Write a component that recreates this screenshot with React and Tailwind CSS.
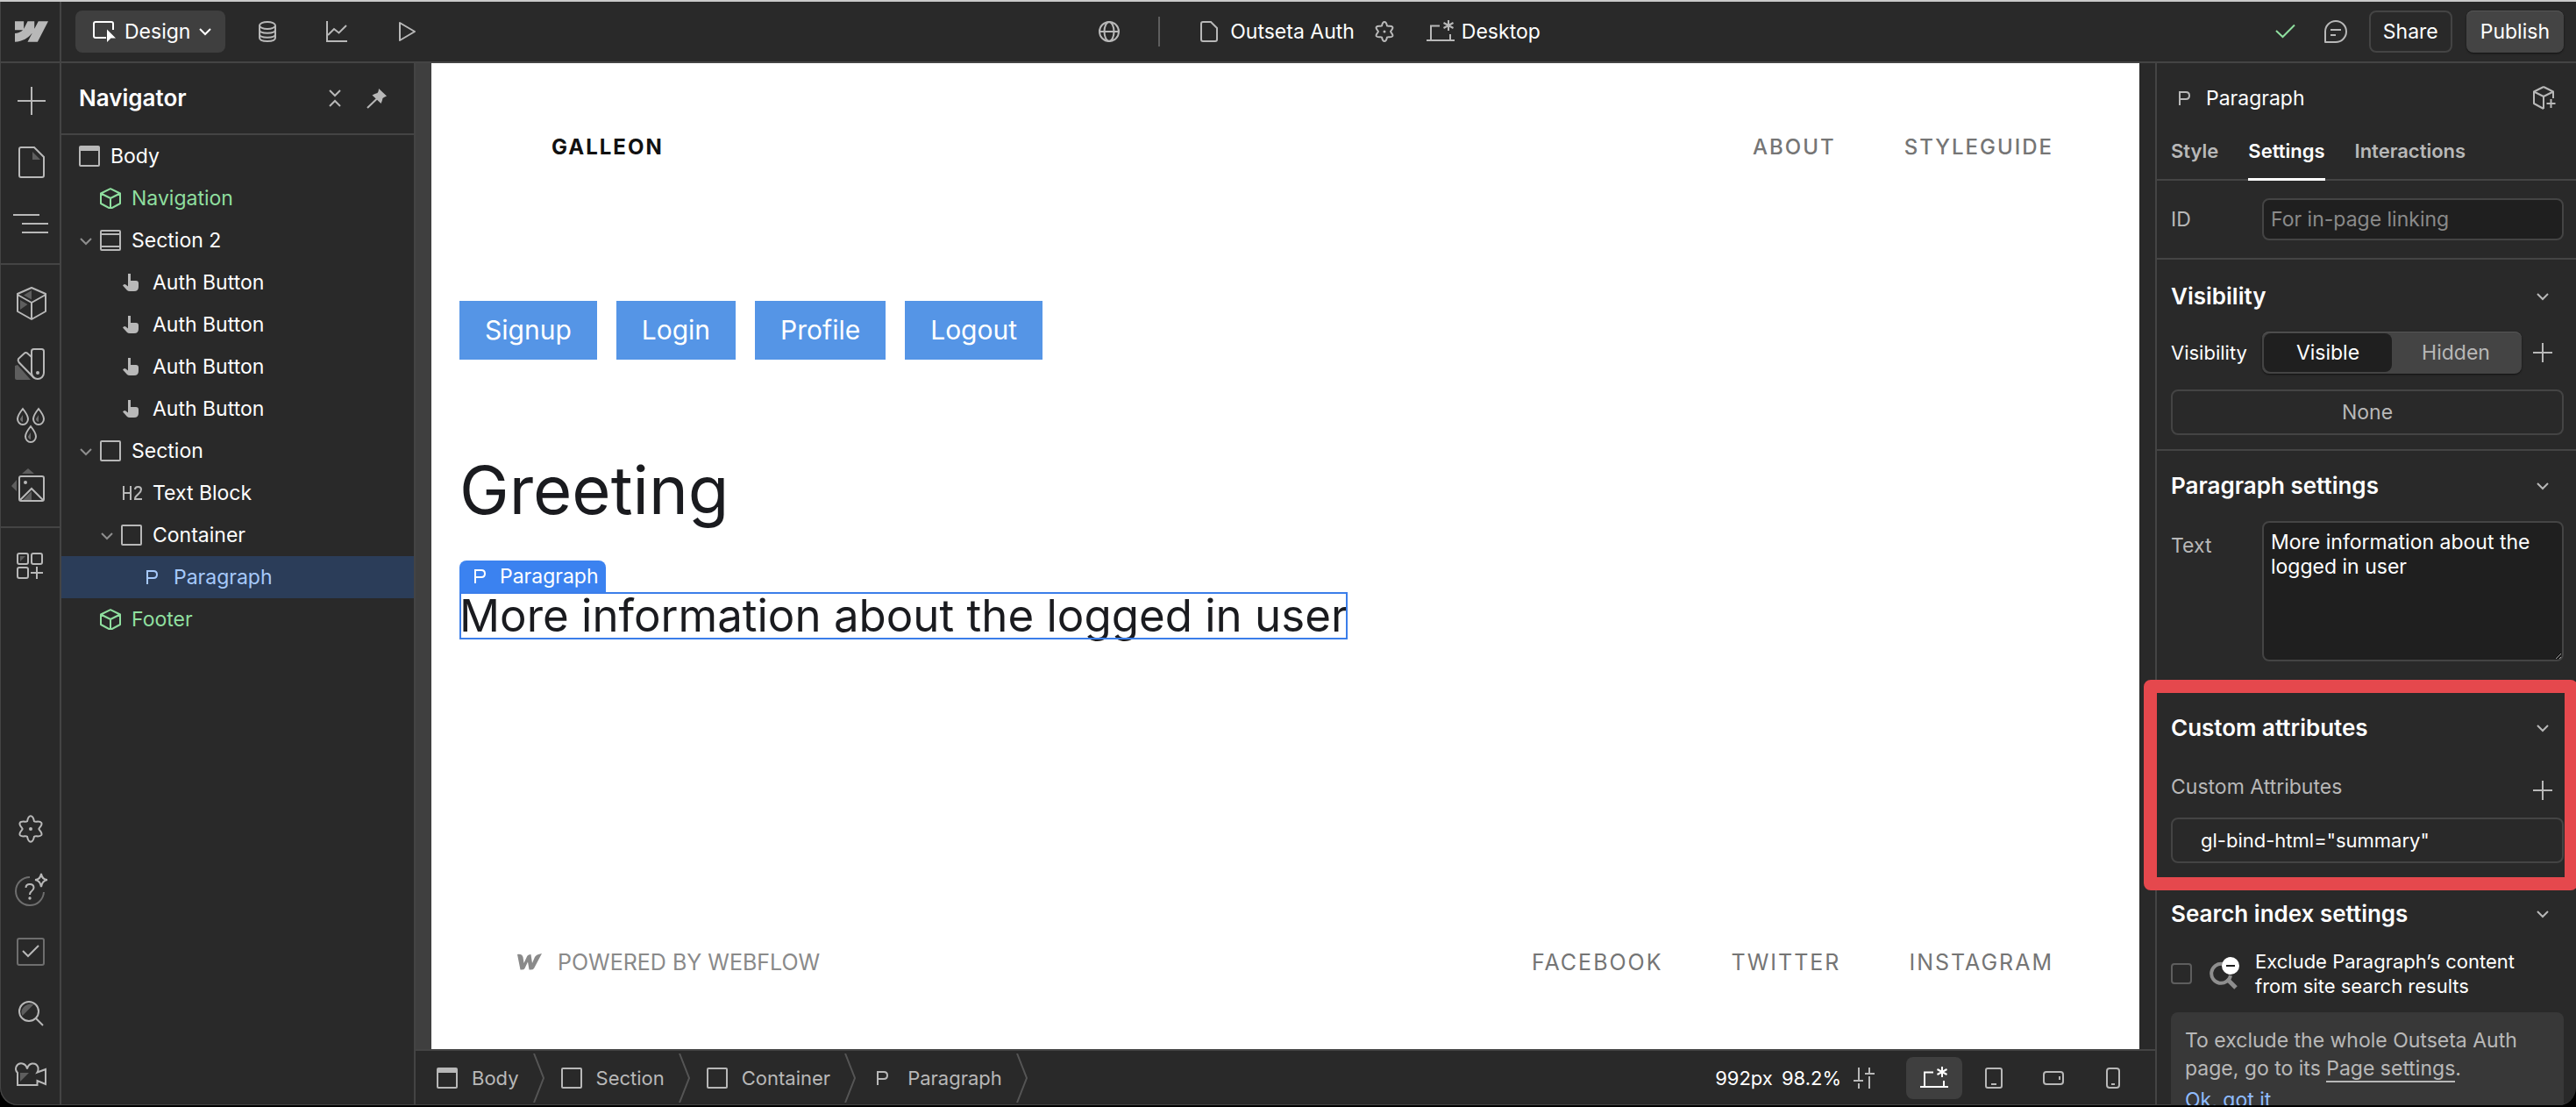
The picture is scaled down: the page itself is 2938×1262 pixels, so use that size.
import React from 'react';

function Icon({ w = 24, h = 24, sw = 2, className = '', children }) {
  return (
    <svg width={w} height={h} viewBox={`0 0 ${w} ${h}`} fill="none" stroke="currentColor" strokeWidth={sw} className={`shrink-0 ${className}`} aria-hidden="true">
      {children}
    </svg>
  );
}

const gearPath =
  'M9 5.5 C9.5 3 10 1 12 1 C14 1 14.5 3 15 5.5 C16 6.3 20 4.8 21.2 6.7 C22.4 8.8 19 11 19 12 C19 13 22.4 15.2 21.2 17.3 C20 19.2 16 17.7 15 18.5 C14.5 21 14 23 12 23 C10 23 9.5 21 9 18.5 C8 17.7 4 19.2 2.8 17.3 C1.6 15.2 5 13 5 12 C5 11 1.6 8.8 2.8 6.7 C4 4.8 8 6.3 9 5.5 Z';

const Chevron = ({ className = '' }) => (
  <Icon w={14} h={10} className={className}><path d="M1 2 L7 8 L13 2" /></Icon>
);
const Cube = () => (
  <Icon><path d="M12 1.2 L23 6.5 V18 L12 24 L1 18 V6.5 Z M1 6.5 L12 12 L23 6.5 M12 12 V24" strokeLinejoin="round" /></Icon>
);
const BodyIcon = () => (
  <Icon><rect x="1" y="1" width="22" height="22" rx="1" /><path d="M1 3.5 H23" strokeWidth="5" /></Icon>
);
const SectionIcon = () => (
  <Icon><rect x="1" y="1" width="22" height="22" rx="1" /><path d="M1 5 H23 M1 19 H23" /></Icon>
);
const BoxIcon = () => (
  <Icon><rect x="1" y="1" width="22" height="22" rx="1" /></Icon>
);
const HandIcon = () => (
  <Icon><path d="M8 2 H11 V10 H17 Q20 10 20 13 V17 Q20 22 15 22 H10 Q8 22 7 21 L2 15.5 Q3.5 13 5.5 14.5 L8 16.5 Z" fill="currentColor" stroke="none" /></Icon>
);
const PIcon = () => (
  <Icon><path d="M6 20 V5 H13 Q17 5 17 9 Q17 13 13 13 H6" /></Icon>
);
const H2Icon = () => (
  <Icon><path d="M3 4 V20 M11 4 V20 M3 12 H11 M16 8 Q16 5 19.5 5 Q23 5 23 8 Q23 10.5 20 13 L17 16 Q16 17 16 19 H24" /></Icon>
);
const Desktop = () => (
  <Icon w={32} h={26}>
    <path d="M0 23 H32 M5 23 V6.5 H15 M27 23 V16" />
    <path d="M25 0 V12 M19.5 3 L30.5 9 M30.5 3 L19.5 9" />
  </Icon>
);
const Plus = () => <Icon w={22} h={22}><path d="M11 0 V22 M0 11 H22" /></Icon>;

const railTop = [
  { label: 'Add', art: <path d="M20 4 V36 M4 20 H36" /> },
  { label: 'Pages', art: <><path d="M8 3 H23 L34 14 V35 Q34 37 32 37 H8 Q6 37 6 35 V5 Q6 3 8 3 Z" /><path d="M21 8 L30 17 H21 Z" fill="#5e5e5e" stroke="none" /></> },
  { label: 'Navigator', art: <path d="M-1 10 H29 M9 20 H39 M9 30 H39" /> },
];
const railMid = [
  { label: 'Components', art: <><path d="M20 3 L36 10 V30 L20 39 L4 30 V10 Z M4 11 L20 20 L36 11 M20 20 V39" strokeLinejoin="round" /><path d="M11 11.5 L20 6 V16.5 Z M7 17 L15.5 22 L7 28 Z" fill="#5e5e5e" stroke="none" /></> },
  { label: 'Styles', art: <><path d="M1 36 V22 L4 21 L19 38 H3 Q1 38 1 36 Z" fill="#5e5e5e" stroke="none" /><path d="M22.5 3 H31.5 Q34 3 34 5.5 V30 A7 7 0 0 1 20 30 V5.500 Q20 3 22.500 3 Z" /><path d="M20 12 L15 7.5 Q13 6.500 11.500 8 L5 14 Q4 16 5.500 18 L23 36" /><circle cx="27" cy="30" r="2" fill="currentColor" stroke="none" /></> },
  { label: 'Variables', art: <>
    <path d="M10 1 Q16 8.5 16 12.5 A6 6.5 0 0 1 4 12.5 Q4 8.5 10 1 Z M28 1 Q34 8.5 34 12.5 A6 6.5 0 0 1 22 12.5 Q22 8.5 28 1 Z M19 21 Q25 28.5 25 32.5 A6 6.5 0 0 1 13 32.5 Q13 28.5 19 21 Z" />
    <path d="M10 8 V16 Q7 15 7 12.5 Z M28 8 V16 Q25 15 25 12.5 Z M19 28 V36 Q16 35 16 32.5 Z" fill="#6e6e6e" stroke="none" />
  </> },
  { label: 'Assets', art: <><path d="M9 5 L16 -1 L23 5 Z M3 12 V25 L-3 19 Z M10 35 L20 25 V35 Z" fill="#5e5e5e" stroke="none" /><rect x="6" y="8" width="28" height="28" rx="2" /><path d="M7 35 L20 22 L33 35" /><circle cx="13" cy="15" r="2" fill="currentColor" stroke="none" /></> },
];
const railApps = [
  { label: 'Apps', art: <><rect x="4" y="6" width="12" height="12" rx="2" /><rect x="20" y="6" width="12" height="12" rx="2" /><rect x="4" y="22" width="12" height="12" rx="2" /><path d="M26 21 V35 M19 28 H33" /><path d="M7 9 H13 L7 15 Z" fill="#5e5e5e" stroke="none" /></> },
];
const railBottom = [
  { label: 'Site settings', art: <g transform="translate(3 4) scale(1.333)"><path d={gearPath} strokeWidth="1.5" /><circle cx="12" cy="12" r="1.5" fill="currentColor" stroke="none" /></g> },
  { label: 'Help', art: <><path d="M18 5 A16 16 0 1 0 34 22" stroke="#6e6e6e" /><path d="M31 1 Q32 8 38 8 Q32 9 31 16 Q30 9 24 8 Q30 8 31 1 Z" /><path d="M13.5 17 Q13.5 13 18 13 Q22.5 13 22.5 17 Q22.5 19 20 21 Q18 22.5 18 25" /><circle cx="18" cy="29" r="1.7" fill="currentColor" stroke="none" /></> },
  { label: 'Audit', art: <><rect x="4" y="5" width="30" height="30" rx="2" stroke="#6e6e6e" /><path d="M10 19 L16 25 L28 13" /></> },
  { label: 'Search', art: <><path d="M9.5 23 Q7 17 11 13 Q16 8 22.5 10 Z" fill="#5e5e5e" stroke="none" /><circle cx="17" cy="18" r="11" /><path d="M25 26 L33 34" /></> },
  { label: 'Video tutorials', art: <>
    <path d="M7 18 H17 L7 28 Z" fill="#5e5e5e" stroke="none" />
    <path d="M4 18 Q1 15 2.5 11 Q5 6.5 9.5 7.5 Q14 8.5 15 13.5 Q16 8.5 20.5 7.5 Q26 7 27.5 12 Q28 15 26.5 17.5 L36 14 V31 L26.5 27 V32 H4 Z" />
  </> },
];

function RailGroup({ items }) {
  return (
    <div className="flex flex-col">
      {items.map((i) => (
        <button key={i.label} aria-label={i.label} className="flex h-[70px] items-center justify-center pl-1">
          <Icon w={40} h={40} className="overflow-visible">{i.art}</Icon>
        </button>
      ))}
    </div>
  );
}

const indent = ['pl-5', 'pl-11', 'pl-[68px]', 'pl-[92px]'];
const tree = [
  { d: 0, icon: <BodyIcon />, label: 'Body' },
  { d: 1, icon: <Cube />, label: 'Navigation', green: true },
  { d: 1, icon: <SectionIcon />, label: 'Section 2', open: true },
  { d: 2, icon: <HandIcon />, label: 'Auth Button' },
  { d: 2, icon: <HandIcon />, label: 'Auth Button' },
  { d: 2, icon: <HandIcon />, label: 'Auth Button' },
  { d: 2, icon: <HandIcon />, label: 'Auth Button' },
  { d: 1, icon: <BoxIcon />, label: 'Section', open: true },
  { d: 2, icon: <H2Icon />, label: 'Text Block' },
  { d: 2, icon: <BoxIcon />, label: 'Container', open: true },
  { d: 3, icon: <PIcon />, label: 'Paragraph', selected: true },
  { d: 1, icon: <Cube />, label: 'Footer', green: true },
];

function TreeRow({ d, icon, label, open, green, selected }) {
  const tone = green ? 'text-[#8fdf9f]' : selected ? 'bg-[#2b3d59] text-[#a6c9fb]' : 'text-white';
  return (
    <li>
      <button className={`relative flex h-12 w-full items-center gap-3 ${indent[d]} ${tone}`}>
        {open && <Chevron className="absolute -ml-[23px] mt-0.5 text-[#8e8e8e]" />}
        <span className={green || selected ? '' : 'text-[#b8b8b8]'}>{icon}</span>
        {label}
      </button>
    </li>
  );
}

function TopBar() {
  return (
    <header className="flex h-[70px] shrink-0 items-center border-b-2 border-[#444] text-[#b8b8b8]">
      <button aria-label="Webflow menu" className="flex h-full w-[70px] items-center justify-center border-r-2 border-[#444] pl-1">
        <svg width="38" height="24" viewBox="0 4.515 24 14.97" fill="currentColor" aria-hidden="true">
          <path d="m24 4.515-7.658 14.97H9.149l3.205-6.204h-.144C9.566 16.713 5.621 18.973 0 19.485v-6.118s3.596-.213 5.71-2.435H0V4.515h6.417v5.278l.144-.001 2.622-5.277h4.854v5.244h.144l2.72-5.244H24Z" />
        </svg>
      </button>
      <div className="flex flex-1 items-center pl-4">
        <button className="flex h-12 items-center gap-2.5 rounded-lg bg-[#3f3f3f] pr-4 pl-5 text-white">
          <Icon w={26}><path d="M15 19 H3 Q1 19 1 17 V3 Q1 1 3 1 H21 Q23 1 23 3 V10" /><path d="M16 9.5 L26 19.5 H20.5 L16 24 Z" fill="currentColor" stroke="none" /></Icon>
          <span>Design</span>
          <Chevron />
        </button>
        <button aria-label="CMS" className="ml-9"><Icon><ellipse cx="12" cy="5" rx="9" ry="4" /><path d="M3 5 V19 C3 24.3 21 24.3 21 19 V5 M3 10 C3 15 21 15 21 10 M3 15 C3 20 21 20 21 15" /></Icon></button>
        <button aria-label="Insights" className="ml-[55px]"><Icon><path d="M1 0 V23 H24" /><path d="M2 16 L9 9 L14.5 13.5 L23 5" /></Icon></button>
        <button aria-label="Preview" className="ml-[55px]"><Icon><path d="M5 2 L22 12 L5 22 Z" strokeLinejoin="round" /></Icon></button>
      </div>
      <div className="flex items-center">
        <button aria-label="Localization"><Icon><circle cx="12" cy="12" r="11" /><ellipse cx="12" cy="12" rx="5.5" ry="11" /><path d="M1 12 H23" /></Icon></button>
        <span className="mx-11 h-[34px] w-0.5 bg-[#5e5e5e]" />
        <button className="flex items-center gap-3 text-white">
          <Icon className="text-[#b8b8b8]"><path d="M5 1 H14 L21 8 V21 Q21 23 19 23 H5 Q3 23 3 21 V3 Q3 1 5 1 Z" /></Icon>
          Outseta Auth
        </button>
        <button aria-label="Page settings" className="ml-[22px]"><Icon><path d={gearPath} /><circle cx="12" cy="12" r="1.5" fill="currentColor" stroke="none" /></Icon></button>
        <button className="ml-9 flex items-center gap-2 text-white">
          <span className="text-[#b8b8b8]"><Desktop /></span>
          Desktop
        </button>
      </div>
      <div className="flex flex-1 items-center justify-end pr-3.5">
        <Icon className="text-[#8fdf9f]"><path d="M2 11 L9.5 18 L23 4.5" /></Icon>
        <button aria-label="Comments" className="ml-8"><Icon w={28} h={28}><path d="M2 26 V14 A12 12 0 1 1 14 26 Z" strokeLinejoin="round" /><path d="M8 12 H20 M8 18 H14" /></Icon></button>
        <button className="ml-6 h-12 rounded-lg border-2 border-[#444] px-3.5 text-white">Share</button>
        <button className="ml-4 h-12 rounded-lg bg-[#444] px-4 text-white shadow-[inset_0_1px_0_#555,0_1px_2px_#111]">Publish</button>
      </div>
    </header>
  );
}

function Navigator() {
  return (
    <aside className="flex w-[404px] shrink-0 flex-col border-r-2 border-[#444]">
      <div className="flex h-[82px] items-center border-b-2 border-[#444] pr-[30px] pl-5 text-[#b8b8b8]">
        <h2 className="flex-1 text-[26px] font-semibold text-white">Navigator</h2>
        <button aria-label="Collapse all" className="mr-7"><Icon w={16}><path d="M2 3 L8 9 L14 3 M2 21 L8 15 L14 21" /></Icon></button>
        <button aria-label="Pin panel"><Icon><path d="M14 1 L23 9.5 Q20 10.5 18.5 12 Q18 15 16.5 18 L6.5 8.5 Q9.5 6.5 12.5 6 Q14 4 14 1 Z" fill="currentColor" stroke="none" /><path d="M1 23 L12 12.5" /></Icon></button>
      </div>
      <ul>{tree.map((t, i) => <TreeRow key={i} {...t} />)}</ul>
    </aside>
  );
}

function Canvas() {
  return (
    <div className="flex min-h-0 flex-1 bg-[#3f3f3f] pl-[18px]">
      <div className="flex flex-1 flex-col bg-white text-[#1a1b1f]">
        <nav className="flex h-48 items-center justify-between pr-[98px] pl-[137px] text-2xl tracking-[2px] text-[#757575]">
          <a href="#home" className="font-bold text-[#111]">GALLEON</a>
          <div className="flex gap-[78px] font-medium">
            <a href="#about">ABOUT</a>
            <a href="#styleguide">STYLEGUIDE</a>
          </div>
        </nav>
        <div className="flex gap-[22px] px-8 pt-[79px] text-[30px] leading-[67px] text-white">
          {['Signup', 'Login', 'Profile', 'Logout'].map((b) => (
            <button key={b} className="bg-[#5595e6] px-[29px]">{b}</button>
          ))}
        </div>
        <div className="px-8 pt-[104px]">
          <h2 className="text-[76px] leading-[88px]">Greeting</h2>
          <div className="relative mt-[73px] inline-block">
            <span className="absolute bottom-full left-0 flex h-9 items-center gap-2.5 rounded-t-lg bg-[#3b82f0] pr-2 pl-3 text-white"><PIcon />Paragraph</span>
            <p className="text-[51px] leading-[54px] whitespace-nowrap outline-2 -outline-offset-2 outline-[#3b7eea]">More information about the logged in user</p>
          </div>
        </div>
        <footer className="mt-auto flex items-center justify-between pr-[98px] pb-[82px] pl-[98px] text-[25px] leading-[34px] text-[#757575]">
          <a href="#webflow" className="flex items-center gap-[18px] text-[#8a8a8a]">
            <Icon w={28} h={20}><path d="M0 1 Q5 0 6.5 4 L7.5 11 L11 3.5 Q12 1 15.5 1 L17 11 L20 4 Q21.5 1 28 0 L19 17 Q18 19 13.5 18.5 L12 9.5 L8.5 17 Q7.5 19 3.5 18.5 Z" fill="currentColor" stroke="none" /></Icon>
            POWERED BY WEBFLOW
          </a>
          <div className="flex gap-[78px] tracking-[2px]">
            <a href="#facebook">FACEBOOK</a>
            <a href="#twitter">TWITTER</a>
            <a href="#instagram">INSTAGRAM</a>
          </div>
        </footer>
      </div>
      <div className="w-[18px] bg-[#292929]" />
    </div>
  );
}

const crumbs = [
  { icon: <BodyIcon />, label: 'Body' },
  { icon: <BoxIcon />, label: 'Section' },
  { icon: <BoxIcon />, label: 'Container' },
  { icon: <PIcon />, label: 'Paragraph' },
];

function BottomBar() {
  return (
    <div className="flex h-16 shrink-0 items-center border-t-2 border-[#444] pl-6 text-[22px] text-[#b8b8b8]">
      {crumbs.map((c) => (
        <div key={c.label} className="flex items-center">
          <button className="flex items-center gap-4">{c.icon}{c.label}</button>
          <Icon w={14} h={56} className="mr-[18px] ml-4 text-[#555]"><path d="M1 0 L12 28 L1 56" /></Icon>
        </div>
      ))}
      <div className="ml-auto flex items-center pr-4">
        <button className="flex items-center gap-2.5 text-white">
          <span>992px</span><span>98.2%</span>
          <Icon className="ml-1 text-[#b8b8b8]"><path d="M6 0 V14 M0 15 H11 M6 18 V24 M18 0 V6 M13 7 H24 M18 10 V24" /></Icon>
        </button>
        <div className="ml-9 flex gap-1">
          <button aria-label="Desktop" className="flex h-12 w-16 items-center justify-center rounded-lg bg-[#3f3f3f] text-white"><Desktop /></button>
          <button aria-label="Tablet" className="flex h-12 w-16 items-center justify-center"><Icon><rect x="3" y="1" width="18" height="22" rx="2" /><path d="M9 19 H15" /></Icon></button>
          <button aria-label="Mobile landscape" className="flex h-12 w-16 items-center justify-center"><Icon><rect x="1" y="5" width="22" height="14" rx="3" /><path d="M19 10 V14" /></Icon></button>
          <button aria-label="Mobile portrait" className="flex h-12 w-16 items-center justify-center"><Icon><rect x="5" y="1" width="14" height="22" rx="3" /><path d="M10 19 H14" /></Icon></button>
        </div>
      </div>
    </div>
  );
}

function SectionHeader({ children }) {
  return (
    <h3 className="text-[26px] font-semibold text-white">
      <button className="flex h-20 w-full items-center justify-between pr-[17px]">
        {children}
        <Chevron className="text-[#b8b8b8]" />
      </button>
    </h3>
  );
}

function SettingsPanel() {
  return (
    <aside className="flex w-[480px] shrink-0 flex-col border-l-2 border-[#444] text-[#b8b8b8]">
      <div className="flex h-20 shrink-0 items-center gap-3 pr-[22px] pl-5">
        <PIcon />
        <span className="flex-1 text-white">Paragraph</span>
        <button aria-label="Create component"><Icon w={28} h={28}><path d="M13 1 L24 6.5 V14 M13 26 L2 20 V6.5 L13 1 M2 6.5 L13 12 L24 6.5 M13 12 V26" strokeLinejoin="round" /><path d="M21.5 15 V25 M16.5 20 H26.5" /></Icon></button>
      </div>
      <div role="tablist" className="flex h-[54px] shrink-0 gap-[34px] border-b-2 border-[#444] pl-4 text-[22px] font-semibold">
        <button role="tab" className="pb-3">Style</button>
        <button role="tab" aria-selected="true" className="-mb-0.5 border-b-3 border-white pb-[11px] text-white">Settings</button>
        <button role="tab" className="pb-3">Interactions</button>
      </div>
      <div className="flex h-[90px] shrink-0 items-center border-b-2 border-[#444] pr-3.5 pl-4">
        <label htmlFor="el-id" className="w-[104px] shrink-0">ID</label>
        <input id="el-id" placeholder="For in-page linking" className="h-12 min-w-0 flex-1 rounded-lg border-2 border-[#444] bg-[#1f1f1f] px-2 placeholder:text-[#8a8a8a]" />
      </div>
      <section className="border-b-2 border-[#444] pt-0.5 pr-3.5 pb-4 pl-4">
        <SectionHeader>Visibility</SectionHeader>
        <div className="flex items-center">
          <span className="w-[104px] shrink-0 text-[22px] text-white">Visibility</span>
          <div className="flex h-12 flex-1 rounded-lg bg-[#444] p-0.5 shadow-[inset_0_1px_0_#555,0_1px_2px_#111]">
            <button aria-pressed="true" className="flex-1 rounded-lg bg-[#1f1f1f] text-white">Visible</button>
            <button aria-pressed="false" className="flex-1">Hidden</button>
          </div>
          <button aria-label="Add visibility condition" className="px-[13px]"><Plus /></button>
        </div>
        <button className="mt-[18px] h-[52px] w-full rounded-lg border-2 border-[#444]">None</button>
      </section>
      <section className="border-b-2 border-[#444] pr-3.5 pb-[34px] pl-4">
        <SectionHeader>Paragraph settings</SectionHeader>
        <div className="flex">
          <label htmlFor="el-text" className="w-[104px] shrink-0 pt-3.5">Text</label>
          <textarea id="el-text" defaultValue="More information about the logged in user" className="h-40 min-w-0 flex-1 rounded-lg border-2 border-[#444] bg-[#1f1f1f] px-2 py-2 leading-7 text-white scheme-dark" />
        </div>
      </section>
      <section className="relative border-b-2 border-[#444] pr-3.5 pb-4 pl-4">
        <div className="pointer-events-none absolute -top-[15px] -right-0.5 -bottom-[15px] -left-[15px] rounded-lg border-[15px] border-[#e5484d]" />
        <SectionHeader>Custom attributes</SectionHeader>
        <div className="flex h-[62px] items-center justify-between pr-[13px] pb-2">
          <span>Custom Attributes</span>
          <button aria-label="Add custom attribute" className="pt-2"><Plus /></button>
        </div>
        <button className="h-[52px] w-full rounded-lg border-2 border-[#444] pl-8 text-left text-[22px] text-white">gl-bind-html="summary"</button>
      </section>
      <section className="min-h-0 flex-1 overflow-hidden pr-3.5 pl-4">
        <SectionHeader>Search index settings</SectionHeader>
        <label className="flex items-center text-[22px] leading-7 text-white">
          <input type="checkbox" className="size-6 appearance-none rounded border-2 border-[#5e5e5e]" />
          <Icon w={34} h={38} className="mr-[18px] ml-5">
            <path d="M15 8 A11 11 0 1 0 24 21" stroke="#8e8e8e" strokeWidth="4" /><path d="M20 25 L30 35" stroke="#8e8e8e" strokeWidth="5" />
            <circle cx="24" cy="10" r="10" fill="#fff" stroke="none" /><path d="M19 10 H29" stroke="#1f1f1f" />
          </Icon>
          <span>Exclude Paragraph’s content<br />from site search results</span>
        </label>
        <div className="mt-4 rounded-lg bg-[#383838] p-4 leading-8">
          To exclude the whole Outseta Auth<br />
          page, go to its <a href="#page-settings" className="border-b-2 border-[#b8b8b8]">Page settings</a>.
          <button className="mt-1 block text-[#8fbcff]">Ok, got it</button>
        </div>
      </section>
    </aside>
  );
}

export default function App() {
  return (
    <div className="flex h-screen flex-col overflow-hidden border-t-2 border-[#cacaca] bg-black pb-0.5 font-['Inter',sans-serif] text-[23px] leading-7">
      <div className="flex min-h-0 flex-1 flex-col overflow-hidden rounded-b-[20px] bg-[#292929] shadow-[inset_1px_-1px_0_#444]">
        <TopBar />
        <div className="flex min-h-0 flex-1">
          <div className="flex w-[70px] shrink-0 flex-col border-r-2 border-[#444] text-[#b8b8b8]">
            <div className="border-b-2 border-[#444] pt-2 pb-2.5"><RailGroup items={railTop} /></div>
            <div className="border-b-2 border-[#444] pt-2 pb-2.5"><RailGroup items={railMid} /></div>
            <div className="pt-2"><RailGroup items={railApps} /></div>
            <div className="mt-auto"><RailGroup items={railBottom} /></div>
          </div>
          <Navigator />
          <main className="flex min-w-0 flex-1 flex-col">
            <Canvas />
            <BottomBar />
          </main>
          <SettingsPanel />
        </div>
      </div>
    </div>
  );
}
